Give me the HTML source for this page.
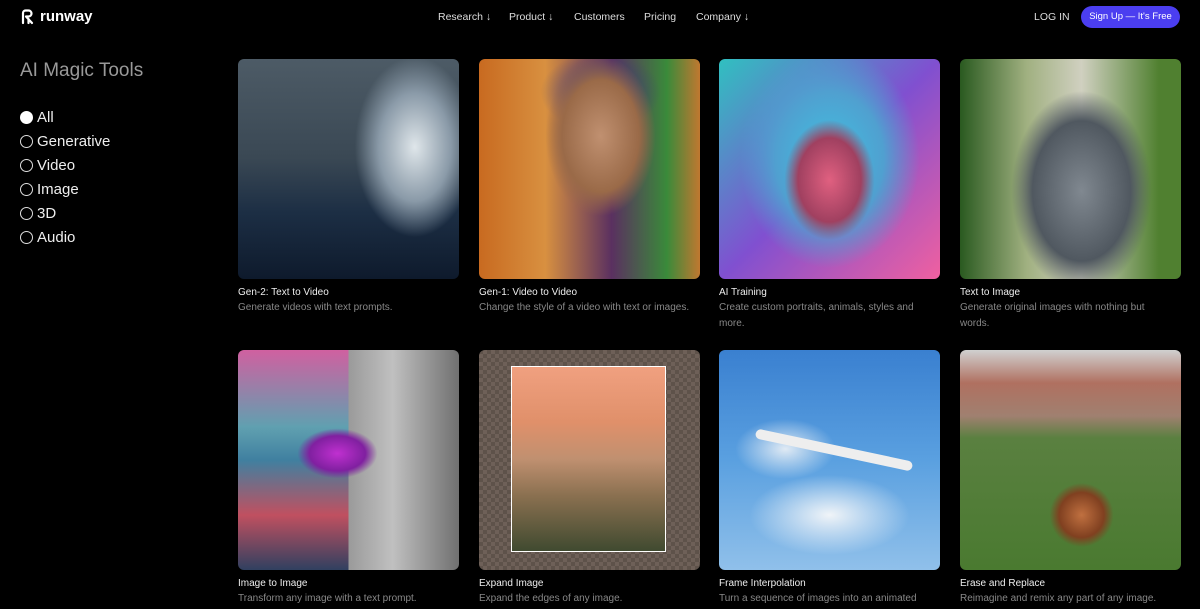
<!DOCTYPE html>
<html><head><meta charset="utf-8"><style>
*{margin:0;padding:0;box-sizing:border-box}
body{width:1200px;height:609px;background:#000;color:#fff;font-family:"Liberation Sans",sans-serif;overflow:hidden;position:relative}
.nav{position:absolute;top:0;left:0;right:0;height:34px}
.logo{position:absolute;left:20px;top:8px;font-weight:bold;font-size:15px;display:flex;align-items:center;gap:4px}
.links{position:absolute;left:438px;top:11px;font-size:10.5px;color:#ddd}
.links span{position:absolute;white-space:nowrap}
.login{position:absolute;left:1034px;top:11px;font-size:10.5px;color:#ddd}
.btn{position:absolute;left:1081px;top:6px;width:99px;height:22px;border-radius:11px;background:#4b3ef0;font-size:9.5px;text-align:center;line-height:22px}
h1{position:absolute;left:20px;top:60px;font-weight:normal;font-size:19px;color:#999}
.f{position:absolute;left:20px;font-size:15px;display:flex;align-items:center;gap:4px;color:#eee}
.f i{width:13px;height:13px;border:1.3px solid #ddd;border-radius:50%;display:inline-block}
.f i.on{background:#fff;border-color:#fff}
.c{position:absolute;width:221px;height:220px;border-radius:6px;overflow:hidden}
.t{position:absolute;font-size:10px;color:#eee}
.d{position:absolute;font-size:10px;color:#888;width:215px;line-height:15.5px}
</style></head><body>
<div class="nav">
<div class="logo"><svg width="16" height="16" viewBox="0 0 16 16"><path d="M3 14V4a2.5 2.5 0 0 1 2.5-2.5h3a3 3 0 0 1 0 6H6l6 6.5M8.5 14V10" fill="none" stroke="#fff" stroke-width="2.2" stroke-linecap="round" stroke-linejoin="round"/></svg>runway</div>
<div class="links"><span style="left:0">Research ↓</span><span style="left:71px">Product ↓</span><span style="left:136px">Customers</span><span style="left:206px">Pricing</span><span style="left:258px">Company ↓</span></div>
<div class="login">LOG IN</div>
<div class="btn">Sign Up — It's Free</div>
</div>
<h1>AI Magic Tools</h1>
<div class="f" style="top:109px"><i class="on"></i>All</div>
<div class="f" style="top:133px"><i></i>Generative</div>
<div class="f" style="top:157px"><i></i>Video</div>
<div class="f" style="top:181px"><i></i>Image</div>
<div class="f" style="top:205px"><i></i>3D</div>
<div class="f" style="top:229px"><i></i>Audio</div>

<div class="c" style="left:238px;top:59px;background:radial-gradient(ellipse 60px 90px at 80% 40%,#dfe6ea,#8a9aa8 60%,transparent 100%),linear-gradient(#4d5b66 0%,#3a4854 45%,#1c2e44 70%,#0e1a2c 100%)"></div>
<div class="c" style="left:479px;top:59px;background:radial-gradient(ellipse 55px 80px at 55% 35%,#c09070,#9a6a48 70%,transparent 100%),radial-gradient(ellipse 60px 40px at 55% 15%,#3a3a7a,transparent),linear-gradient(90deg,#c86a20,#d89040 30%,#5a3060 60%,#3a8a3a 85%,#c07830)"></div>
<div class="c" style="left:719px;top:59px;background:radial-gradient(ellipse 45px 60px at 50% 55%,#e06080,#a04060 70%,transparent 100%),radial-gradient(ellipse 90px 110px at 50% 45%,#40c0e0,#50a0d0 60%,transparent 100%),linear-gradient(135deg,#30c0c0,#8050d0 50%,#f060a0)"></div>
<div class="c" style="left:960px;top:59px;background:radial-gradient(ellipse 70px 100px at 55% 60%,#808890,#505860 70%,transparent 100%),linear-gradient(90deg,#2a5a20,#a0b080 30%,#d0d0c0 55%,#508030 90%)"></div>

<div class="t" style="left:238px;top:287px">Gen-2: Text to Video</div><div class="d" style="left:238px;top:300px">Generate videos with text prompts.</div>
<div class="t" style="left:479px;top:287px">Gen-1: Video to Video</div><div class="d" style="left:479px;top:300px;width:225px">Change the style of a video with text or images.</div>
<div class="t" style="left:719px;top:287px">AI Training</div><div class="d" style="left:719px;top:300px">Create custom portraits, animals, styles and more.</div>
<div class="t" style="left:960px;top:287px">Text to Image</div><div class="d" style="left:960px;top:300px">Generate original images with nothing but words.</div>

<div class="c" style="left:238px;top:350px;background:radial-gradient(ellipse 40px 25px at 45% 47%,#c030d0,#8020a0 70%,transparent 100%),linear-gradient(90deg,transparent 50%,#9a9a9a 50%,#c0c0c0 70%,#707070),linear-gradient(#d060a0,#60a0b0 35%,#4080a0 50%,#c05060 75%,#304060)"></div>
<div class="c" style="left:479px;top:350px;background:repeating-conic-gradient(#6e6058 0 25%,#5e524a 0 50%) 0 0/8px 8px"><div style="position:absolute;left:32px;top:16px;width:155px;height:186px;border:1.5px solid #fff;background:linear-gradient(#f0a080,#e0906a 30%,#c09070 50%,#8a7050 70%,#404a30)"></div></div>
<div class="c" style="left:719px;top:350px;background:radial-gradient(ellipse 80px 40px at 50% 75%,#f0f4f8,transparent),radial-gradient(ellipse 50px 30px at 30% 45%,#e0eaf4,transparent),linear-gradient(#3a80d0,#5aa0e0 50%,#90c0ea)"><div style="position:absolute;left:35px;top:95px;width:160px;height:10px;background:#eee;border-radius:5px;transform:rotate(12deg)"></div></div>
<div class="c" style="left:960px;top:350px;background:radial-gradient(circle 32px at 55% 75%,#c07040,#804020 70%,transparent 100%),linear-gradient(#d0d0d0,#b07060 15%,#a08070 30%,#5a8040 40%,#4a7a30 100%)"></div>

<div class="t" style="left:238px;top:578px">Image to Image</div><div class="d" style="left:238px;top:591px">Transform any image with a text prompt.</div>
<div class="t" style="left:479px;top:578px">Expand Image</div><div class="d" style="left:479px;top:591px">Expand the edges of any image.</div>
<div class="t" style="left:719px;top:578px">Frame Interpolation</div><div class="d" style="left:719px;top:591px">Turn a sequence of images into an animated</div>
<div class="t" style="left:960px;top:578px">Erase and Replace</div><div class="d" style="left:960px;top:591px;width:225px">Reimagine and remix any part of any image.</div>
</body></html>
